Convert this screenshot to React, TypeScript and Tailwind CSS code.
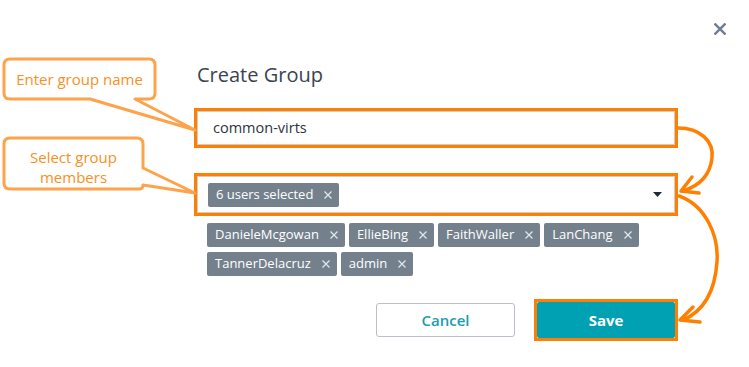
const members = ['DanieleMcgowan', 'EllieBing', 'FaithWaller', 'LanChang', 'TannerDelacruz', 'admin'];

const Cross: React.FC<{ size: number; stroke: number; color: string }> = ({ size, stroke, color }) => (
  <svg width={size} height={size} viewBox={`0 0 ${size} ${size}`}>
    <path d={`M0.5 0.5 L${size - 0.5} ${size - 0.5} M${size - 0.5} 0.5 L0.5 ${size - 0.5}`} stroke={color} strokeWidth={stroke} />
  </svg>
);

const Chip: React.FC<{ label: string }> = ({ label }) => (
  <span className="flex h-[24px] items-center gap-[11px] rounded-[2px] bg-[#74818d] pl-[8px] pr-[7px] text-[13px] text-white">
    {label}
    <Cross size={8} stroke={1.2} color="#e3e7eb" />
  </span>
);

export default function App() {
  return (
    <div className="relative h-[367px] w-[749px] overflow-hidden bg-white font-['Open_Sans',sans-serif]">
      <button className="absolute left-[714px] top-[23px]">
        <Cross size={12} stroke={2.4} color="#6e7d92" />
      </button>

      <div className="flex w-[678px] flex-col pl-[194px] pt-[62px]">
        <h1 className="pl-[3px] text-[20px] leading-[26px] text-[#3a4450]">Create Group</h1>

        <div className="mt-[20px] h-[40px] border-[3px] border-[#ff8000]">
          <div className="flex h-full items-center border border-[#c9cdd2] bg-white pl-[15px] text-[14.5px] text-[#2b3440]">
            common-virts
          </div>
        </div>

        <div className="mt-[25px] h-[43px] border-[3px] border-[#ff8000]">
          <div className="flex h-full items-center justify-between border border-[#c9cdd2] bg-white pl-[10px] pr-[12px]">
            <Chip label="6 users selected" />
            <svg width="9" height="5" viewBox="0 0 9 5">
              <path d="M0 0 H9 L4.5 5 Z" fill="#1f2a37" />
            </svg>
          </div>
        </div>

        <div className="mt-[7px] flex w-[460px] flex-wrap gap-x-[4px] gap-y-[5px] pl-[13px]">
          {members.map((m) => (
            <Chip key={m} label={m} />
          ))}
        </div>

        <div className="mt-[23px] flex items-center justify-end gap-[19px]">
          <button className="h-[34px] w-[139px] rounded-[3px] border border-[#b9c0c7] bg-white text-[15px] font-semibold text-[#1a9db0]">
            Cancel
          </button>
          <div className="h-[42px] w-[144px] border-[3px] border-[#ff8000]">
            <button className="h-full w-full rounded-[2px] bg-[#00a1b2] text-[15px] font-bold text-white">
              Save
            </button>
          </div>
        </div>
      </div>

      <svg className="pointer-events-none absolute left-0 top-0" width="749" height="367">
        <g fill="#fff" stroke="#fca34b" strokeWidth="3" strokeLinejoin="round">
          <path d="M10 59 H149 Q155 59 155 65 V93 Q155 99 149 99 H135 L195 130 L90 99 H10 Q4 99 4 93 V65 Q4 59 10 59 Z" />
          <path d="M10 138 H137 Q143 138 143 144 V168 L195 193 L143 185 Q143 189 139 189 H10 Q4 189 4 183 V144 Q4 138 10 138 Z" />
        </g>
        <g fill="none" stroke="#ff8000" strokeWidth="3.5" strokeLinecap="round" strokeLinejoin="round">
          <path d="M678 128 C700 128 714 141 712 158 C710 176 699 186 683 191" />
          <path d="M692 177 L681 191 L699 193" />
          <path d="M679 196 C705 205 719 235 717 262 C715 291 704 311 683 320" />
          <path d="M693 307 L680 320 L700 322" />
        </g>
      </svg>

      <div className="absolute left-[4px] top-[59px] flex h-[40px] w-[151px] items-center justify-center text-[15px] text-[#f7901e]">
        Enter group name
      </div>
      <div className="absolute left-[4px] top-[147px] w-[139px] text-center text-[15px] leading-[20px] text-[#f7901e]">
        Select group
        <br />
        members
      </div>
    </div>
  );
}
